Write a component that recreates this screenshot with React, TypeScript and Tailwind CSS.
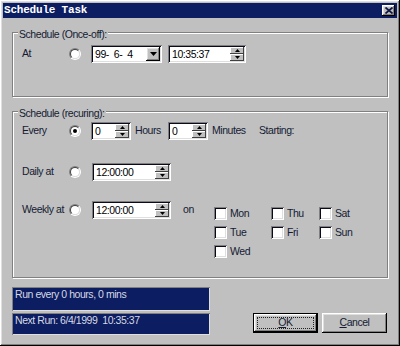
import type { ReactNode } from 'react';

const raised = 'shadow-[inset_-1px_-1px_#000,inset_1px_1px_#fff,inset_-2px_-2px_#808080,inset_2px_2px_#dfdfdf]';
const sunken = 'shadow-[inset_1px_1px_#808080,inset_-1px_-1px_#fff,inset_2px_2px_#0a0a1a,inset_-2px_-2px_#dfdfdf]';

function Group({ label, className, children }: { label: string; className: string; children: ReactNode }) {
  return (
    <div className={`relative w-[376px] border border-[#808080] shadow-[1px_1px_#fff,inset_1px_1px_#fff] pl-[9px] ${className}`}>
      <span className="absolute -top-[5px] left-[5px] bg-[#c0c0c0] px-[1px] leading-[12px]">{label}</span>
      {children}
    </div>
  );
}

function Radio({ on }: { on?: boolean }) {
  return (
    <div className="flex h-[12px] w-[12px] items-center justify-center rounded-full border border-t-[#808080] border-l-[#808080] border-r-white border-b-white">
      <div className="flex h-[10px] w-[10px] items-center justify-center rounded-full border border-t-[#404040] border-l-[#404040] border-r-[#dfdfdf] border-b-[#dfdfdf] bg-white">
        {on && <div className="h-[4px] w-[4px] rounded-full bg-black" />}
      </div>
    </div>
  );
}

function Spin() {
  return (
    <div className="flex w-[14px] flex-col">
      <div className="flex h-[7px] items-center justify-center bg-[#c0c0c0] shadow-[inset_-1px_-1px_#404040,inset_1px_1px_#fff]">
        <svg width="5" height="3" viewBox="0 0 5 3"><polygon points="2.5,0 5,3 0,3" fill="#000" /></svg>
      </div>
      <div className="flex h-[7px] items-center justify-center bg-[#c0c0c0] shadow-[inset_-1px_-1px_#404040,inset_1px_1px_#fff]">
        <svg width="5" height="3" viewBox="0 0 5 3"><polygon points="0,0 5,0 2.5,3" fill="#000" /></svg>
      </div>
    </div>
  );
}

function SpinField({ value, className }: { value: string; className: string }) {
  return (
    <div className={`flex h-[18px] bg-white p-[2px] ${sunken} ${className}`}>
      <span className="flex-1 whitespace-pre pl-[2px] leading-[14px] text-black">{value}</span>
      <Spin />
    </div>
  );
}

function Check({ label, className }: { label: string; className: string }) {
  return (
    <div className={`flex items-center ${className}`}>
      <div className={`h-[13px] w-[13px] bg-white ${sunken}`} />
      <span className="ml-[3px] leading-[13px]">{label}</span>
    </div>
  );
}

function Row({ label, on, children }: { label: string; on?: boolean; children: ReactNode }) {
  return (
    <div className="flex h-[18px] items-center">
      <span className="w-[47px]">{label}</span>
      <Radio on={on} />
      {children}
    </div>
  );
}

export default function App() {
  return (
    <div className={`h-[346px] w-[400px] bg-[#c0c0c0] p-[3px] font-['Liberation_Sans',Arial,sans-serif] text-[10.5px] tracking-[-0.45px] text-[#141b33] ${raised}`}>
      <div className="flex h-[15px] items-center justify-between bg-[#0c1d62] pl-[1px] pr-[2px]">
        <span className="font-['Liberation_Mono',monospace] text-[11px] font-bold leading-[13px] tracking-[-0.2px] text-white">Schedule Task</span>
        <div className={`flex h-[11px] w-[13px] items-center justify-center bg-[#c0c0c0] ${raised}`}>
          <svg width="8" height="7" viewBox="0 0 8 7">
            <path d="M0.5 0.5L7.5 6.5M7.5 0.5L0.5 6.5" stroke="#0c1440" strokeWidth="1.7" />
          </svg>
        </div>
      </div>

      <div className="pl-[9px] pt-[14px]">
        <Group label="Schedule (Once-off):" className="h-[65px] pt-[12px]">
          <Row label="At">
            <div className={`ml-[10px] flex h-[18px] w-[71px] bg-white p-[2px] ${sunken}`}>
              <span className="flex-1 whitespace-pre pl-[2px] leading-[14px] text-black">99-  6-  4</span>
              <div className={`flex w-[14px] items-center justify-center bg-[#c0c0c0] ${raised}`}>
                <svg width="7" height="4" viewBox="0 0 7 4"><polygon points="0,0 7,0 3.5,4" fill="#000" /></svg>
              </div>
            </div>
            <SpinField value="10:35:37" className="ml-[6px] w-[78px]" />
          </Row>
        </Group>

        <Group label="Schedule (recuring):" className="mt-[14px] h-[167px] pt-[10px]">
          <Row label="Every" on>
            <SpinField value="0" className="ml-[10px] w-[40px]" />
            <span className="w-[37px] pl-[4px]">Hours</span>
            <SpinField value="0" className="w-[40px]" />
            <span className="w-[51px] pl-[4px]">Minutes</span>
            <span>Starting:</span>
          </Row>
          <div className="mt-[23px]">
            <Row label="Daily at">
              <SpinField value="12:00:00" className="ml-[11px] w-[79px]" />
            </Row>
          </div>
          <div className="mt-[20px] flex items-start">
            <Row label="Weekly at">
              <SpinField value="12:00:00" className="ml-[11px] w-[79px]" />
              <span className="ml-[12px] w-[31px]">on</span>
            </Row>
            <div className="mt-[6px] flex flex-col gap-[6px]">
              <div className="flex">
                <Check label="Mon" className="w-[57px]" />
                <Check label="Thu" className="w-[48px]" />
                <Check label="Sat" className="w-[50px]" />
              </div>
              <div className="flex">
                <Check label="Tue" className="w-[57px]" />
                <Check label="Fri" className="w-[48px]" />
                <Check label="Sun" className="w-[50px]" />
              </div>
              <div className="flex">
                <Check label="Wed" className="w-[57px]" />
              </div>
            </div>
          </div>
        </Group>

        <div className="mt-[9px] flex">
          <div className="flex w-[198px] flex-col">
            <div className="h-[24px] bg-[#0c1d62] pl-[3px] pt-[1px] leading-[13px] text-[#d6d9e2] shadow-[inset_1px_1px_#808080,inset_-1px_-1px_#dfdfdf]">
              Run every 0 hours, 0 mins
            </div>
            <div className="mt-[2px] h-[22px] whitespace-pre bg-[#0c1d62] pl-[3px] pt-[1px] leading-[13px] text-[#d6d9e2] shadow-[inset_1px_1px_#808080,inset_-1px_-1px_#dfdfdf]">
              Next Run: 6/4/1999  10:35:37
            </div>
          </div>
          <div className="ml-[43px] mt-[26px] flex gap-[4px]">
            <button className={`h-[20px] w-[65px] border border-black bg-[#c0c0c0] p-[3px] ${raised}`}>
              <div className="flex h-full items-center justify-center border border-dotted border-[#222]">
                <span><span className="underline">O</span>K</span>
              </div>
            </button>
            <button className={`flex h-[20px] w-[65px] items-center justify-center bg-[#c0c0c0] ${raised}`}>
              <span><span className="underline">C</span>ancel</span>
            </button>
          </div>
        </div>
      </div>
    </div>
  );
}
